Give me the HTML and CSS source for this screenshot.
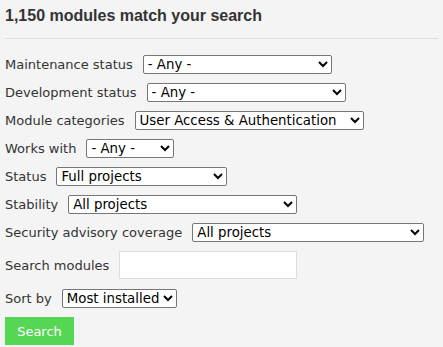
FILE: index.html
```html
<!DOCTYPE html>
<html lang="en">
<head>
    <meta charset="UTF-8">
    <meta name="viewport" content="width=device-width, initial-scale=1.0">
    <title>Module search</title>
    <link rel="stylesheet" href="styles.css">
</head>
<body>
    <h2 class="result-count">1,150 modules match your search</h2>

    <form class="search-form">
        <div class="form-row">
            <label for="maintenance">Maintenance status</label>
            <select id="maintenance" class="sel-maintenance">
                <option>- Any -</option>
            </select>
        </div>
        <div class="form-row">
            <label for="development">Development status</label>
            <select id="development" class="sel-development">
                <option>- Any -</option>
            </select>
        </div>
        <div class="form-row">
            <label for="categories">Module categories</label>
            <select id="categories" class="sel-categories">
                <option>User Access &amp; Authentication</option>
            </select>
        </div>
        <div class="form-row">
            <label for="works-with">Works with</label>
            <select id="works-with" class="sel-works">
                <option>- Any -</option>
            </select>
        </div>
        <div class="form-row">
            <label for="status">Status</label>
            <select id="status" class="sel-status">
                <option>Full projects</option>
            </select>
        </div>
        <div class="form-row">
            <label for="stability">Stability</label>
            <select id="stability" class="sel-stability">
                <option>All projects</option>
            </select>
        </div>
        <div class="form-row">
            <label for="security">Security advisory coverage</label>
            <select id="security" class="sel-security">
                <option>All projects</option>
            </select>
        </div>
        <div class="form-row text-row">
            <label for="text">Search modules</label>
            <input type="text" id="text" class="text-input">
        </div>
        <div class="form-row">
            <label for="sort">Sort by</label>
            <select id="sort" class="sel-sort">
                <option>Most installed</option>
            </select>
        </div>
        <button type="button" class="search-button">Search</button>
    </form>
</body>
</html>
```

FILE: styles.css
```css
body {
    margin: 0;
    padding: 0 5px;
    font-family: "DejaVu Sans", sans-serif;
    font-size: 13px;
    color: #333333;
    background-color: #F4F4F4;
}
.result-count {
    margin: 0;
    padding: 6px 0 13px;
    font-family: "Liberation Sans", Arial, sans-serif;
    font-size: 16px;
    line-height: 19px;
    font-weight: bold;
    color: #333333;
    border-bottom: 1px solid #DDDDDD;
}
.search-form {
    padding-top: 16px;
}
.form-row {
    display: flex;
    align-items: center;
    gap: 10px;
    margin-bottom: 9px;
}
.form-row label {
    white-space: nowrap;
}
.form-row select {
    height: 19px;
    font-family: "DejaVu Sans", sans-serif;
    font-size: 13.33px;
    color: #000000;
    background-color: #FFFFFF;
    border: 1px solid #767676;
    border-radius: 2px;
}
.sel-maintenance { width: 189px; }
.sel-development { width: 199px; }
.sel-categories { width: 229px; }
.sel-works { width: 88px; }
.sel-status { width: 171px; }
.sel-stability { width: 229px; }
.sel-security { width: 232px; }
.sel-sort { width: 115px; }
.text-row {
    margin-top: 9px;
    margin-bottom: 10px;
}
.text-input {
    width: 178px;
    height: 28px;
    box-sizing: border-box;
    border: 1px solid #DDDDDD;
    background-color: #FFFFFF;
}
.search-button {
    width: 69px;
    height: 28px;
    padding: 0;
    border: none;
    background-color: #55D655;
    color: #FFFFFF;
    font-family: "DejaVu Sans", sans-serif;
    font-size: 13px;
}
```
